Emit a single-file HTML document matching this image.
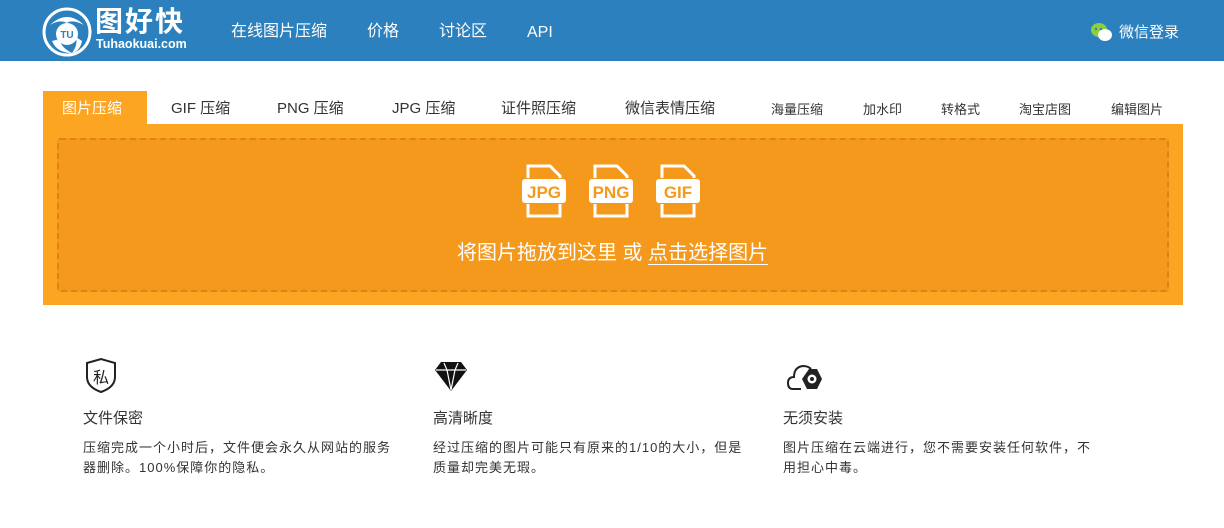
<!DOCTYPE html>
<html><head><meta charset="utf-8"><style>
*{margin:0;padding:0;box-sizing:border-box}
body{width:1224px;height:528px;background:#fff;font-family:"Liberation Sans","Noto Sans CJK SC",sans-serif;position:relative;overflow:hidden}
.hd{position:absolute;left:0;top:0;width:1224px;height:61px;background:#2b80bd}
.nav{position:absolute;top:21px;color:#fff;font-size:16px;line-height:22px;height:22px}
.tab{position:absolute;top:99px;font-size:15px;color:#333;line-height:20px}
.tab.s{font-size:13px;top:100px}
.panel{position:absolute;left:43px;top:124px;width:1140px;height:181px;background:#fba522}
.inner{position:absolute;left:14px;top:14px;width:1112px;height:154px;background:#f5991d;border:2px dashed #d9831a;border-radius:3px}
.f{position:absolute;top:355px;width:320px}
.f h3{font-weight:normal;font-size:15px;color:#333;position:absolute;top:52px;white-space:nowrap}
.f p{position:absolute;top:83px;font-size:13px;letter-spacing:1px;color:#333;line-height:20px;width:314px}
</style></head><body>
<div class="hd">
<svg style="position:absolute;left:42px;top:7px" width="50" height="50" viewBox="0 0 50 50"><circle cx="25" cy="25" r="23" fill="none" stroke="#fff" stroke-width="3"/><path d="M8 18 Q25 2 42 18 Q30 12 25 16 Q18 12 8 18Z M10 34 Q15 46 30 46 Q18 40 18 32Z M40 34 Q38 44 30 46 Q36 38 34 30Z" fill="#fff"/><circle cx="25" cy="27" r="11" fill="#fff"/><text x="25" y="31" font-size="10" font-weight="bold" fill="#2b80bd" text-anchor="middle" font-family="Liberation Sans">TU</text></svg>
<div style="position:absolute;left:95px;top:5px;color:#fff;font-size:28px;line-height:34px;font-weight:bold;letter-spacing:2px">图好快</div>
<div style="position:absolute;left:96px;top:37px;color:#fff;font-size:12.5px;line-height:14px;font-weight:bold">Tuhaokuai.com</div>
<div class="nav" style="left:231px">在线图片压缩</div>
<div class="nav" style="left:367px">价格</div>
<div class="nav" style="left:439px">讨论区</div>
<div class="nav" style="left:527px;top:22px">API</div>
<svg style="position:absolute;left:1090px;top:22px" width="24" height="20" viewBox="0 0 24 20"><ellipse cx="9" cy="8" rx="8" ry="7" fill="#8ccf3a"/><ellipse cx="15" cy="13" rx="7" ry="6" fill="#fff"/><circle cx="6" cy="7" r="1.2" fill="#2b80bd"/><circle cx="11" cy="7" r="1.2" fill="#2b80bd"/></svg>
<div class="nav" style="left:1119px;font-size:15px;top:22px">微信登录</div>
</div>
<div style="position:absolute;left:43px;top:91px;width:104px;height:34px;background:#fba522"></div>
<div class="tab" style="left:62px;color:#fff">图片压缩</div>
<div class="tab" style="left:171px">GIF 压缩</div>
<div class="tab" style="left:277px">PNG 压缩</div>
<div class="tab" style="left:392px">JPG 压缩</div>
<div class="tab" style="left:501px">证件照压缩</div>
<div class="tab" style="left:625px">微信表情压缩</div>
<div class="tab s" style="left:771px">海量压缩</div>
<div class="tab s" style="left:863px">加水印</div>
<div class="tab s" style="left:941px">转格式</div>
<div class="tab s" style="left:1019px">淘宝店图</div>
<div class="tab s" style="left:1111px">编辑图片</div>
<div class="panel"><div class="inner"></div></div>
<svg style="position:absolute;left:518px;top:164px" width="192" height="56" viewBox="0 0 192 56">
<g fill="none" stroke="#fff" stroke-width="3"><path d="M10 14 V2 H32 L42 12 V14 M10 40 V52 H42 V40"/><path d="M77 14 V2 H99 L109 12 V14 M77 40 V52 H109 V40"/><path d="M144 14 V2 H166 L176 12 V14 M144 40 V52 H176 V40"/></g>
<g fill="#fff"><rect x="4" y="15" width="44" height="24" rx="3"/><rect x="71" y="15" width="44" height="24" rx="3"/><rect x="138" y="15" width="44" height="24" rx="3"/></g>
<g fill="#f5991d" font-family="Liberation Sans" font-weight="bold" font-size="17" text-anchor="middle"><text x="26" y="34">JPG</text><text x="93" y="34">PNG</text><text x="160" y="34">GIF</text></g></svg>
<div style="position:absolute;left:457px;top:240px;color:#fff;font-size:20px;line-height:26px">将图片拖放到这里 或 <span style="border-bottom:1.5px solid #fff">点击选择图片</span></div>
<div class="f" style="left:83px">
<svg width="36" height="36" viewBox="0 0 36 36" style="position:absolute;left:0;top:2px"><path d="M4 6 L18 2 L32 6 V20 Q32 30 18 35 Q4 30 4 20Z" fill="none" stroke="#222" stroke-width="2"/><text x="18" y="26" font-size="16" text-anchor="middle" fill="#222" font-family="Noto Sans CJK SC">私</text></svg>
<h3>文件保密</h3><p>压缩完成一个小时后，文件便会永久从网站的服务器删除。100%保障你的隐私。</p></div>
<div class="f" style="left:433px">
<svg width="36" height="36" viewBox="0 0 36 36" style="position:absolute;left:0;top:2px"><path d="M8 5 H28 L34 13 L18 34 L2 13Z" fill="#111"/><path d="M3 13 H33 M11 6 L14 13 L18 33 M25 6 L22 13 L18 33" stroke="#fff" stroke-width="1.2" fill="none"/></svg>
<h3>高清晰度</h3><p>经过压缩的图片可能只有原来的1/10的大小，但是质量却完美无瑕。</p></div>
<div class="f" style="left:783px">
<svg width="40" height="36" viewBox="0 0 40 36" style="position:absolute;left:4px;top:4px"><path d="M14 30 H6 Q1 30 1 24 Q1 18 7 18 Q7 8 16 7 Q21 7 24 10" fill="none" stroke="#222" stroke-width="2"/><path d="M22 10 L30 10 L35 20 L30 30 L20 30 L15 20Z" fill="#222"/><circle cx="25" cy="20" r="4.5" fill="#fff"/><circle cx="25" cy="20" r="2" fill="#222"/></svg>
<h3>无须安装</h3><p>图片压缩在云端进行，您不需要安装任何软件，不用担心中毒。</p></div>
</body></html>
